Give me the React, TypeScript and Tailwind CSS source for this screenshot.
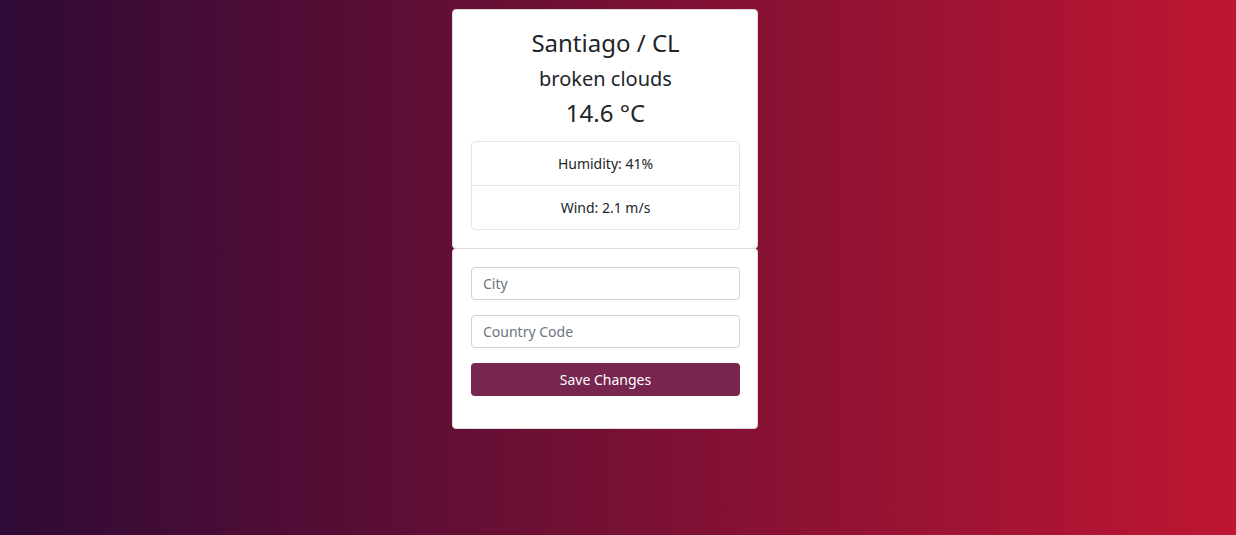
import { useState } from "react";

const weather = {
    city: "Santiago",
    country: "CL",
    description: "broken clouds",
    temp: 14.6,
    humidity: 41,
    wind: 2.1,
};

export default function App() {
    const [city, setCity] = useState("");
    const [country, setCountry] = useState("");

    return (
        <div
            className="h-[535px] w-full bg-linear-to-r/srgb from-[#2e0a36] to-[#bf1632] pt-[9px] pl-[452px]"
            style={{ fontFamily: '"Noto Sans", "Open Sans", sans-serif' }}
        >
            <div className="w-[306px]">
                {/* weather info */}
                <div className="rounded-[4px] border border-[#dcdcdc] bg-white pl-[18px] pr-[17px] pt-[18px] pb-[18px] text-center text-[#212529]">
                    <h3 className="text-[24px] leading-[29px]">
                        {weather.city} / {weather.country}
                    </h3>
                    <p className="mt-[10px] text-[20px] leading-[24px]">{weather.description}</p>
                    <p className="mt-[7px] text-[24px] leading-[29px]">{weather.temp} °C</p>
                    <ul className="mt-[14px] rounded-[4px] border border-[#e3e5e8] text-[14px]">
                        <li className="flex h-[43px] items-center justify-center">Humidity: {weather.humidity}%</li>
                        <li className="flex h-[44px] items-center justify-center border-t border-[#e3e5e8]">
                            Wind: {weather.wind} m/s
                        </li>
                    </ul>
                </div>

                {/* form */}
                <div className="-mt-px rounded-[4px] border border-[#dcdcdc] bg-white pl-[18px] pr-[17px] pt-[18px] pb-[32px]">
                    <form className="flex flex-col gap-[15px]" onSubmit={(e) => e.preventDefault()}>
                        <input
                            value={city}
                            onChange={(e) => setCity(e.target.value)}
                            placeholder="City"
                            className="h-[33px] w-full rounded-[4px] border border-[#ced4da] px-[11px] text-[14px] text-[#495057] placeholder:text-[#6c757d] outline-none"
                        />
                        <input
                            value={country}
                            onChange={(e) => setCountry(e.target.value)}
                            placeholder="Country Code"
                            className="h-[33px] w-full rounded-[4px] border border-[#ced4da] px-[11px] text-[14px] text-[#495057] placeholder:text-[#6c757d] outline-none"
                        />
                        <button
                            type="submit"
                            className="h-[33px] w-full rounded-[4px] bg-[#76264f] text-[14px] text-white"
                        >
                            Save Changes
                        </button>
                    </form>
                </div>
            </div>
        </div>
    );
}
